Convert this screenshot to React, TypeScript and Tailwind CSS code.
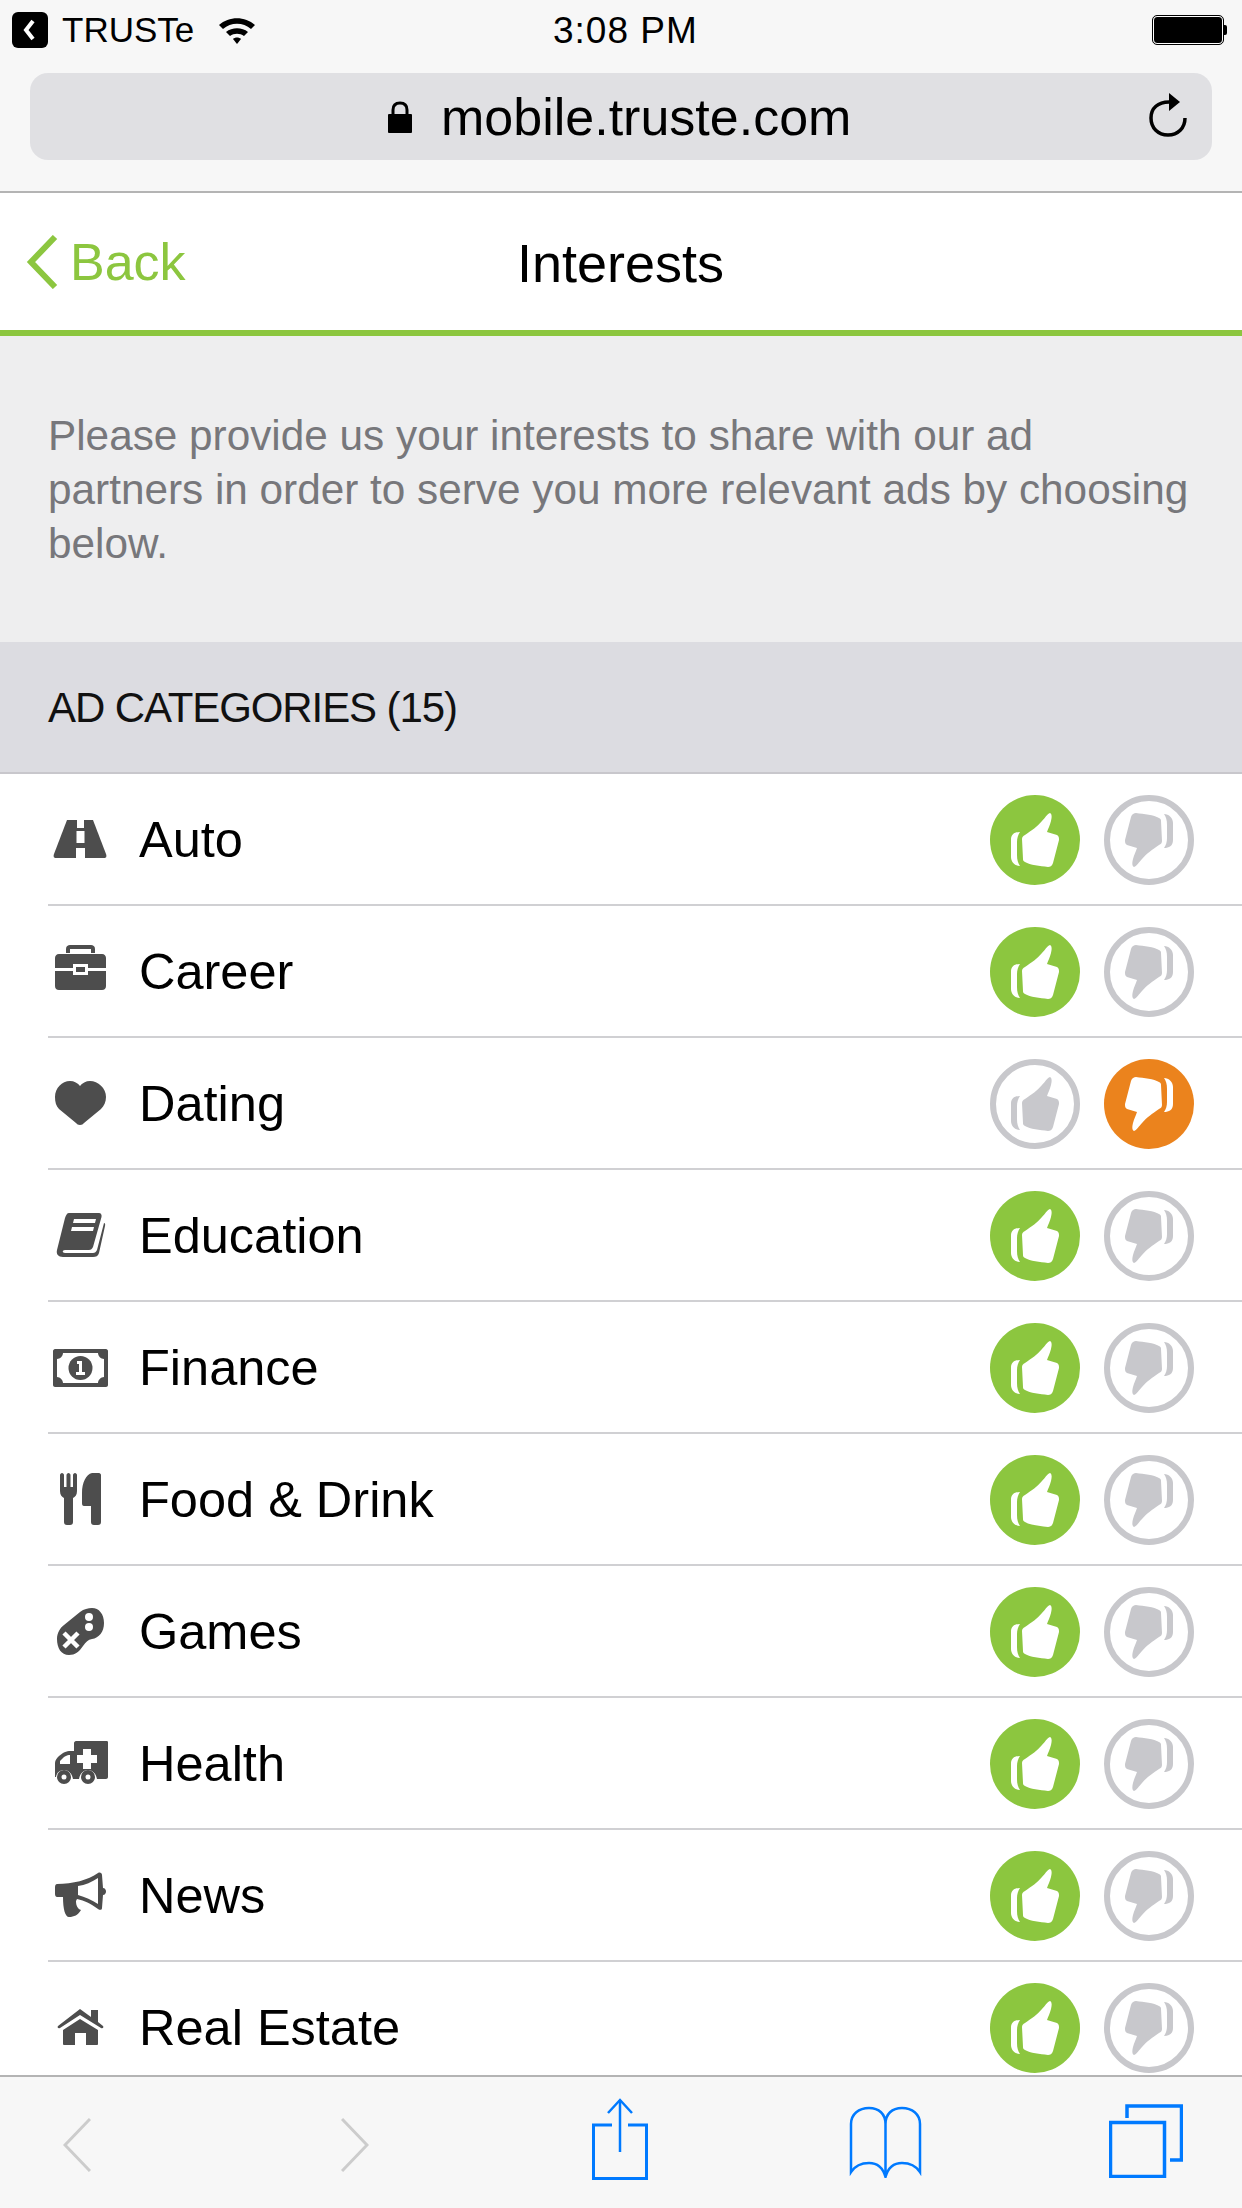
import type { ReactNode } from "react"

function ThumbUp({ fill }: { fill: string }) {
  return (
    <g fill={fill}>
      <path d="M60 18C62 19 62 22 61 26C60 30 58 34 57 37L67 40C69 41 69 43 69 45L63 68C62 71 60 72 58 72C50 71 40 70 35 67C33 66 33 65 33 64L32 44C32 42 33 41 35 40C42 35 47 32 52 26C55 23 57 19 60 18Z" />
      <path d="M30 37C25 37 21 39 21 45L21 62C21 67 25 71 30 71C28 68 27 65 27 60L27 47C27 43 28 40 30 37Z" />
    </g>
  )
}

function VoteButton({ kind, active }: { kind: "up" | "down"; active: boolean }) {
  const bg = kind === "up" ? "#8cc63f" : "#eb831d"
  return (
    <svg viewBox="0 0 90 90" className="w-[90px] h-[90px] shrink-0">
      {active ? (
        <circle cx="45" cy="45" r="45" fill={bg} />
      ) : (
        <circle cx="45" cy="45" r="42" fill="#fff" stroke="#c8c8cc" strokeWidth="6" />
      )}
      <g transform={kind === "down" ? "rotate(180 45 45)" : undefined}>
        <ThumbUp fill={active ? "#fff" : "#c8c8cc"} />
      </g>
    </svg>
  )
}

function Glyph({ children }: { children: ReactNode }) {
  return (
    <svg viewBox="0 0 64 64" className="w-[64px] h-[64px] shrink-0 mb-[2px]" fill="#4d4d4d">
      {children}
    </svg>
  )
}

const icons: Record<string, ReactNode> = {
  road: (
    <>
      <path d="M19 13H45L58 47C59 50 58 51 56 51H8C6 51 5 50 6 47Z" />
      <path fill="#fff" d="M29 13H36V21H29ZM28.500 24H36.500V36H28.500ZM28 41H37V51H28Z" />
    </>
  ),
  briefcase: (
    <>
      <path d="M18 14V10C18 7 20 6 22 6H43C45 6 47 7 47 10V14H43V10H22V14Z" />
      <path d="M11 15H54C56.500 15 58 17 58 19V29H40V25H25V29H7V19C7 17 8.500 15 11 15Z" />
      <path d="M7 32H25V36H40V32H58V47C58 49.500 56.500 51 54 51H11C8.500 51 7 49.500 7 47Z" />
      <path d="M28 28H37V33H28Z" />
    </>
  ),
  heart: (
    <path d="M32 54C30 54 29 53 28 52L11 38C8 35 7 31 7 26C7 17 14 10 22 10C26 10 30 12 32 15C34 12 38 10 42 10C50 10 58 17 58 26C58 31 56 35 53 38L36 52C35 53 34 54 32 54Z" />
  ),
  book: (
    <path fillRule="evenodd" d="M21 10H51C53 10 54 12 53.500 14L45 44C44 46 43 47 41 47H17C14 47 14 50 17 50H45C47 50 48 49 49 47L56 20C57 20 57.500 21 57 23L51 50C50 53 48 54 45 54H15C10 54 8 51 9 47L17 15C18 12 19 10 21 10ZM26 16L25 20H47L48 16ZM24 24L23 28H45L46 24Z" />
  ),
  money: (
    <>
      <path fillRule="evenodd" d="M7 14H58C59 14 60 15 60 16V50C60 51 59 52 58 52H7C6 52 5 51 5 50V16C5 15 6 14 7 14ZM15 18C15 21 12 24 9 24V42C12 42 15 45 15 48H50C50 45 53 42 56 42V24C53 24 50 21 50 18Z" />
      <circle cx="32.500" cy="33" r="12" />
      <path fill="#fff" d="M29 26H34V37H37V40H28V37H31V29H29Z" />
    </>
  ),
  food: (
    <>
      <path d="M12 8C12 7 13 6 14 6C15 6 16 7 16 8V20H18.500V8C18.500 7 19.500 6 20.500 6C21.500 6 22.500 7 22.500 8V20H25V8C25 7 26 6 27 6C28 6 29 7 29 8V24C29 28 27 30 25 31V55C25 57 24 58 22 58H19C17 58 16 57 16 55V31C14 30 12 28 12 24Z" />
      <path d="M44 6H51C52 6 53 7 53 8V55C53 57 52 58 50 58H46C44 58 43 57 43 55V39H36C34.500 39 34 38 34 36V26C34 16 38 7 44 6Z" />
    </>
  ),
  games: (
    <>
      <path d="M32 13C36 10 40 9 44 9C51 9 56 15 56 24C56 33 51 39 44 40C40 40.500 38 43 35 47C31 53 27 56 21 56C13 56 9 49 9 40C9 34 12 29 16 26Z" />
      <circle cx="41" cy="18" r="4" fill="#fff" />
      <circle cx="41" cy="28" r="4" fill="#fff" />
      <path d="M16 34L23 41M30 34L23 41M16 48L23 41M30 48L23 41" stroke="#fff" strokeWidth="4.500" fill="none" />
    </>
  ),
  health: (
    <>
      <path fillRule="evenodd" d="M26 12C26 11 27 10 28 10H59C60 10 60 11 60 12V46C60 47 59 48 58 48H49C48 42 44 39 40 39C36 39 32 42 31 48H25C24 42 20 39 16 39C12 39 9 41 8 46H7V32C7 29 9 27 11 25L15 22C17 21 19 20 21 20H26ZM35 18V24H29V32H35V38H43V32H49V24H43V18ZM21 24C19 24 18 25 16 26L12 30V33H22V24Z" />
      <path fillRule="evenodd" d="M16 39A7 7 0 1 0 16 53A7 7 0 1 0 16 39ZM16 43.500A2.500 2.500 0 1 1 16 48.500A2.500 2.500 0 1 1 16 43.500Z" />
      <path fillRule="evenodd" d="M40 39A7 7 0 1 0 40 53A7 7 0 1 0 40 39ZM40 43.500A2.500 2.500 0 1 1 40 48.500A2.500 2.500 0 1 1 40 43.500Z" />
    </>
  ),
  news: (
    <path fillRule="evenodd" d="M9 21C25 21 40 17 50 10C52 9 54 10 54 12L55 25C57 25 58 27 58 28.500C58 30 57 32 55 32L54 45C54 47 52 47.500 50 46C42 40 37 38 29 36L28 38C28 43 30 46 33 47C30 52 26 54 21 54C17 54 15 46 15 34H9C8 34 7 33 7 31V24C7 22 8 21 9 21ZM30 23C37 22 44 19 50 15V41C44 37 37 34 30 32Z" />
  ),
  house: (
    <>
      <path d="M32 14L43 22V15H50V27L55 31C56 32 55 34 53 33L32 20L12 33C10 34 9 32 10 31Z" />
      <path d="M32 24L50 35V49C50 50 49 50 48 50H38V38H27V50H17C16 50 15 50 15 49V35Z" />
    </>
  ),
}

const categories = [
  { name: "Auto", icon: "road", liked: true },
  { name: "Career", icon: "briefcase", liked: true },
  { name: "Dating", icon: "heart", liked: false },
  { name: "Education", icon: "book", liked: true },
  { name: "Finance", icon: "money", liked: true },
  { name: "Food & Drink", icon: "food", liked: true },
  { name: "Games", icon: "games", liked: true },
  { name: "Health", icon: "health", liked: true },
  { name: "News", icon: "news", liked: true },
  { name: "Real Estate", icon: "house", liked: true },
]

function StatusBar() {
  return (
    <div className="h-[60px] flex items-start relative">
      <div className="flex items-center pl-3 pt-3">
        <div className="w-9 h-9 bg-black rounded-[6px] flex items-center justify-center">
          <svg viewBox="0 0 36 36" className="w-9 h-9">
            <path d="M21 9L14 18L21 27" fill="none" stroke="#fff" strokeWidth="4" />
          </svg>
        </div>
        <span className="ml-[14px] text-[35px] leading-[36px] text-black">TRUSTe</span>
        <svg viewBox="0 0 38 28" className="ml-[24px] w-[38px] h-[28px]">
          <path d="M1 9C11 0 27 0 37 9L33 13C25 6 13 6 5 13Z" />
          <path d="M8 16C14 11 24 11 30 16L26 20C22 17 16 17 12 20Z" />
          <path d="M15 23C17 21 21 21 23 23L19 28Z" />
        </svg>
      </div>
      <span className="absolute left-[553px] top-[13px] text-[37px] leading-[36px] tracking-[1px] text-black">3:08 PM</span>
      <div className="absolute left-[1153px] top-[16px] flex items-center">
        <div className="w-[70px] h-[28px] bg-black rounded-[4px] border border-white outline outline-1 outline-black" />
        <div className="w-[3px] h-[10px] bg-black rounded-r-[2px] ml-px" />
      </div>
    </div>
  )
}

function UrlBar() {
  return (
    <div className="mt-[13px] mx-[30px] h-[87px] bg-[#e0e0e3] rounded-[18px] flex items-center relative">
      <div className="flex items-center ml-[358px]">
        <svg viewBox="0 0 24 32" className="w-6 h-8">
          <path d="M5 14V9C5 4 8 2 12 2C16 2 19 4 19 9V14" fill="none" stroke="#000" strokeWidth="3" />
          <rect x="0" y="13" width="24" height="19" rx="1" />
        </svg>
        <span className="ml-[29px] text-[52px] leading-none text-black">mobile.truste.com</span>
      </div>
      <svg viewBox="0 0 38 44" className="absolute left-[1119px] top-[20px] w-[38px] h-[44px]" fill="none">
        <path d="M20 9C9 9 2 15 2 25C2 35 9 42 19 42C29 42 36 35 36 25" stroke="#000" strokeWidth="3.500" />
        <path d="M20 0L31 9L20 18Z" fill="#000" />
      </svg>
    </div>
  )
}

function BottomBar() {
  return (
    <div className="h-[133px] shrink-0 bg-[#f7f7f7] border-t-2 border-[#b4b4b4] flex items-start pl-[63px] pt-[21px]">
      <svg viewBox="0 0 28 54" className="mt-[20px] w-[28px] h-[54px]" fill="none">
        <path d="M27 1L2 27L27 53" stroke="#cccccc" strokeWidth="3" />
      </svg>
      <svg viewBox="0 0 28 54" className="ml-[250px] mt-[20px] w-[28px] h-[54px]" fill="none">
        <path d="M1 1L26 27L1 53" stroke="#cccccc" strokeWidth="3" />
      </svg>
      <svg viewBox="0 0 56 82" className="ml-[223px] w-[56px] h-[82px]" fill="none" stroke="#007aff">
        <path d="M20 27H1.500V80.500H54.500V27H36" strokeWidth="3" />
        <path d="M28 54V2" strokeWidth="2.500" />
        <path d="M16 15L28 2L40 15" strokeWidth="2.500" />
      </svg>
      <svg viewBox="0 0 73 72" className="ml-[201px] mt-[8px] w-[73px] h-[72px]" fill="none" stroke="#007aff" strokeWidth="2.500">
        <path d="M36.500 70V18C36.500 8 30 2 20 2C10 2 2 8 2 18V66C6 60 12 57 20 57C28 57 34 62 36.500 71C39 62 45 57 53 57C61 57 67 60 71 66V18C71 8 63 2 53 2C43 2 36.500 8 36.500 18" />
      </svg>
      <svg viewBox="0 0 74 74" className="ml-[187px] mt-[6px] w-[74px] h-[74px]" fill="none" stroke="#007aff">
        <rect x="1.500" y="18.500" width="54" height="54" strokeWidth="3.500" />
        <path d="M18 14V2H72.500V56H61" strokeWidth="3.500" />
      </svg>
    </div>
  )
}

export default function App() {
  return (
    <div className="w-[1242px] h-[2208px] flex flex-col overflow-hidden bg-white font-['Liberation_Sans',Arial,sans-serif]">
      {/* Browser chrome */}
      <div className="h-[193px] shrink-0 bg-[#f7f7f7] border-b-2 border-[#b4b4b4]">
        <StatusBar />
        <UrlBar />
      </div>

      {/* Nav bar */}
      <div className="h-[143px] shrink-0 bg-white border-b-[6px] border-[#8cc63f] flex items-center relative">
        <svg viewBox="0 0 32 54" className="ml-[26px] w-8 h-[54px]" fill="none">
          <path d="M29 2L5 27L29 52" stroke="#8cc63f" strokeWidth="6" />
        </svg>
        <span className="ml-[12px] text-[52px] leading-none text-[#8cc63f]">Back</span>
        <span className="absolute left-[517px] top-[43px] text-[54px] leading-none text-black">Interests</span>
      </div>

      {/* Intro */}
      <div className="shrink-0 bg-[#eeeeef] px-12 pt-[73px] pb-[71px] text-[42.3px] leading-[54px] text-[#77777b]">
        Please provide us your interests to share with our ad
        <br />
        partners in order to serve you more relevant ads by choosing
        <br />
        below.
      </div>

      {/* Section heading */}
      <div className="h-[132px] shrink-0 bg-[#dcdce1] border-b-2 border-[#c8c7cc] flex items-center px-12 text-[42px] tracking-[-1.1px] text-[#111]">
        AD CATEGORIES (15)
      </div>

      {/* List */}
      <div className="flex-1 min-h-0 overflow-hidden">
        {categories.map((c) => (
          <div key={c.name} className="h-[132px] pl-12 flex">
            <div className="flex-1 flex items-center pt-[2px] pr-12 border-b-2 border-[#d0d0d3]">
              <Glyph>{icons[c.icon]}</Glyph>
              <span className="ml-[27px] text-[50.500px] leading-none text-black">{c.name}</span>
              <div className="ml-auto flex gap-6">
                <VoteButton kind="up" active={c.liked} />
                <VoteButton kind="down" active={!c.liked} />
              </div>
            </div>
          </div>
        ))}
      </div>

      <BottomBar />
    </div>
  )
}
